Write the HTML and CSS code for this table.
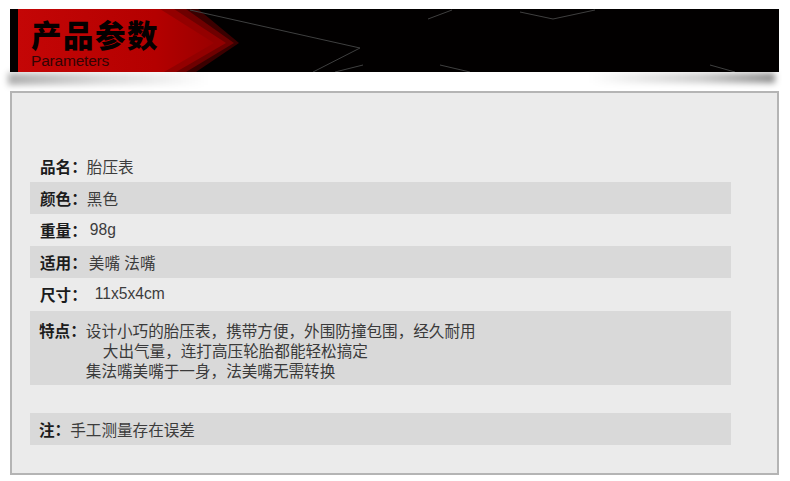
FILE: index.html
```html
<!DOCTYPE html>
<html lang="zh-CN">
<head>
<meta charset="utf-8">
<title>产品参数</title>
<link rel="stylesheet" href="styles.css">
</head>
<body>
<header class="banner">
  <svg class="banner-art" viewBox="0 0 769 63" preserveAspectRatio="none" aria-hidden="true">
    <defs>
      <linearGradient id="red" x1="0" x2="1" y1="0" y2="0">
        <stop offset="0" stop-color="#c40606"/>
        <stop offset="0.7" stop-color="#b40000"/>
        <stop offset="1" stop-color="#9a0000"/>
      </linearGradient>
    </defs>
    <polygon points="8,0 188,0 229,34 186,63 8,63" fill="#3a0000"/>
    <polygon points="8,0 176,0 224,34 176,63 8,63" fill="#6e0000"/>
    <polygon points="8,0 164,0 216,34 166,63 8,63" fill="#930000"/>
    <polygon points="8,0 150,0 204,34 154,63 8,63" fill="url(#red)"/>
    <g stroke="#3f3f3f" stroke-width="1" fill="none">
      <polyline points="180,1 350,39 303,63"/>
      <line x1="353" y1="56" x2="325" y2="63"/>
      <line x1="418" y1="10" x2="442" y2="1"/>
      <polyline points="510,3 543,10 585,1"/>
      <line x1="430" y1="56" x2="460" y2="63"/>
      <line x1="700" y1="56" x2="725" y2="63"/>
    </g>
  </svg>
  <div class="banner-text">
    <h1 class="title">产品参数</h1>
    <p class="subtitle">Parameters</p>
  </div>
</header>

<section class="panel">
  <div class="row"><span class="label">品名：</span><span class="value">胎压表</span></div>
  <div class="row shade"><span class="label">颜色：</span><span class="value">黑色</span></div>
  <div class="row"><span class="label">重量：</span><span class="value gap3">98g</span></div>
  <div class="row shade"><span class="label">适用：</span><span class="value gap2">美嘴 法嘴</span></div>
  <div class="row"><span class="label">尺寸：</span><span class="value gap8">11x5x4cm</span></div>
  <div class="row shade tall">
    <span class="label">特点：</span>
    <div class="lines">
      <div>设计小巧的胎压表，携带方便，外围防撞包围，经久耐用</div>
      <div class="indent">大出气量，连打高压轮胎都能轻松搞定</div>
      <div>集法嘴美嘴于一身，法美嘴无需转换</div>
    </div>
  </div>
  <div class="row shade note"><span class="label">注：</span><span class="value">手工测量存在误差</span></div>
</section>
</body>
</html>
```

FILE: styles.css
```css
* { box-sizing: border-box; }

html {
  margin: 0;
  padding: 0;
  background: #ffffff;
}

body {
  margin: 0;
  padding: 0;
  font-family: "Noto Sans CJK SC", "Liberation Sans", sans-serif;
  width: 790px;
  height: 481px;
  overflow: hidden;
}

.banner {
  position: relative;
  margin: 9px 11px 0 10px;
  height: 63px;
  background: #020000;
}

.banner::before,
.banner::after {
  content: "";
  position: absolute;
  top: 64px;
  z-index: -1;
  filter: blur(3px);
}

.banner::before {
  left: -2px;
  width: 200px;
  height: 12px;
  background: linear-gradient(to right, rgba(0,0,0,0.32), rgba(0,0,0,0.15) 45%, rgba(0,0,0,0));
}

.banner::after {
  right: 4px;
  width: 185px;
  height: 10px;
  background: linear-gradient(to left, rgba(0,0,0,0.45), rgba(0,0,0,0.2) 40%, rgba(0,0,0,0));
}

.banner-art {
  position: absolute;
  left: 0;
  top: 0;
  width: 100%;
  height: 100%;
  display: block;
}

.banner-text {
  position: relative;
  padding: 9px 0 0 21px;
}

.title {
  margin: 0;
  font-size: 30.5px;
  line-height: 32px;
  font-weight: 900;
  color: #050000;
  letter-spacing: 1.5px;
}

.subtitle {
  margin: 3px 0 0;
  font-family: "Liberation Sans", sans-serif;
  font-size: 15.5px;
  line-height: 15px;
  color: #330404;
  letter-spacing: -0.2px;
}

.panel {
  margin: 19px 11px 0 10px;
  height: 384px;
  border: 2px solid #b4b4b4;
  background: #ebebeb;
  padding: 57px 46px 0 18px;
}

.row {
  display: flex;
  align-items: center;
  height: 32px;
  padding-left: 10px;
  font-size: 15.6px;
  color: #3a3a3a;
}

.shade {
  background: #d9d9d9;
}

.label {
  font-weight: 700;
  color: #1c1c1c;
  flex: none;
}

.value {
  color: #3c3c3c;
  font-family: "Liberation Sans", "Noto Sans CJK SC", sans-serif;
}

.gap2 { margin-left: 2px; }
.gap3 { margin-left: 3px; }
.gap8 { margin-left: 8px; }

.tall {
  margin-top: 1px;
  height: 74px;
  align-items: flex-start;
  padding-top: 9px;
  padding-left: 9px;
  line-height: 20px;
}

.lines .indent {
  padding-left: 17px;
}

.note {
  margin-top: 28px;
  padding-left: 9px;
}
```
